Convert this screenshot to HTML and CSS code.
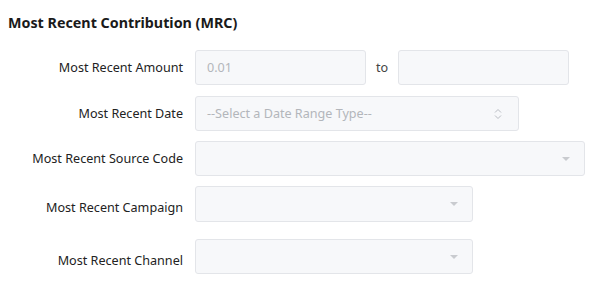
FILE: index.html
```html
<!DOCTYPE html>
<html lang="en">
<head>
    <meta charset="UTF-8">
    <title>Most Recent Contribution</title>
    <link rel="stylesheet" href="styles.css">
</head>
<body>

    <section class="mrc">
        <h2>Most Recent Contribution (MRC)</h2>

        <div class="form-row row-amount">
            <label>Most Recent Amount</label>
            <div class="field field-amount"><span class="placeholder">0.01</span></div>
            <span class="to">to</span>
            <div class="field field-amount"></div>
        </div>

        <div class="form-row row-date">
            <label>Most Recent Date</label>
            <div class="field field-date">
                <span class="placeholder">--Select a Date Range Type--</span>
                <svg class="updown" width="8" height="12" viewBox="0 0 8 12">
                    <path d="M1 4.5 L4 1.5 L7 4.5 M1 7.5 L4 10.5 L7 7.5" fill="none" stroke="#b9bcc2" stroke-width="1"/>
                </svg>
            </div>
        </div>

        <div class="form-row row-source">
            <label>Most Recent Source Code</label>
            <div class="field field-source"><span class="caret"></span></div>
        </div>

        <div class="form-row row-campaign">
            <label>Most Recent Campaign</label>
            <div class="field field-short"><span class="caret"></span></div>
        </div>

        <div class="form-row row-channel">
            <label>Most Recent Channel</label>
            <div class="field field-short"><span class="caret"></span></div>
        </div>
    </section>

</body>
</html>
```

FILE: styles.css
```css
body {
    font-family: 'Noto Sans', 'Open Sans', sans-serif;
    margin: 0;
    padding: 0 8px;
    background-color: #fff;
    color: #222;
}

.mrc h2 {
    font-size: 14.3px;
    font-weight: bold;
    margin: 0;
    padding-top: 13px;
    height: 50px;
    box-sizing: border-box;
    color: #1a1a1a;
}

.form-row {
    display: flex;
    align-items: center;
    height: 35px;
}

.form-row label {
    width: 175px;
    text-align: right;
    padding-right: 12px;
    font-size: 12.6px;
    color: #222;
    flex-shrink: 0;
}

.row-date {
    margin-top: 11px;
}

.row-source {
    margin-top: 10px;
}

.row-campaign {
    margin-top: 10px;
    height: 36px;
}

.row-campaign label,
.row-channel label {
    padding-top: 7px;
}

.row-channel {
    margin-top: 17px;
}

.field {
    position: relative;
    box-sizing: border-box;
    height: 100%;
    background-color: #f7f8fa;
    border: 1px solid #e3e5e9;
    border-radius: 3px;
    display: flex;
    align-items: center;
    padding: 0 11px;
}

.placeholder {
    font-size: 12.6px;
    color: #b3b6bb;
}

.field-amount {
    width: 171px;
}

.to {
    width: 32px;
    text-align: center;
    font-size: 12.6px;
    color: #444;
}

.field-date {
    width: 324px;
    justify-content: space-between;
}

.updown {
    margin-right: 5px;
}

.field-source {
    width: 390px;
}

.field-short {
    width: 278px;
}

.caret {
    position: absolute;
    right: 14px;
    top: 50%;
    margin-top: -2px;
    width: 0;
    height: 0;
    border-left: 4.5px solid transparent;
    border-right: 4.5px solid transparent;
    border-top: 4.5px solid #c9cbcf;
}
```
